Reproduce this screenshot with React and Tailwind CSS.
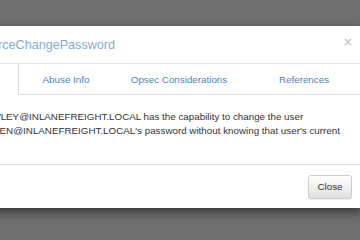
export default function App() {
  const font = { fontFamily: '"Liberation Sans", Arial, sans-serif' };
  return (
    <div
      className="w-[360px] h-[240px] overflow-hidden bg-[#6f6f6f] flex flex-col"
      style={font}
    >
      <div className="mt-[26px] ml-[-60px] w-[423px] h-[182px] shrink-0 bg-white rounded-[4px] shadow-[0_4px_11px_rgba(0,0,0,0.55)] flex flex-col">
        {/* header */}
        <div className="h-[38px] shrink-0 border-b border-[#e5e5e5] flex items-center justify-between pl-[10.5px] pr-[11px]">
          <span className="text-[12.6px] leading-[18px] text-[#86abd1] whitespace-nowrap">
            Help: ForceChangePassword
          </span>
          <span className="mb-[4px] text-[14.7px] leading-none font-bold text-[#cfcfcf]">×</span>
        </div>
        {/* tabs */}
        <div className="h-[31px] shrink-0 flex pl-[10px] text-[9.8px] whitespace-nowrap">
          <div className="w-[69px] pt-[2px] border-r border-[#dddddd] flex items-center justify-center text-[#555555]">
            Info
          </div>
          <div className="w-[94px] pt-[2px] border-b border-[#dddddd] flex items-center justify-center text-[#4f83ba]">
            Abuse Info
          </div>
          <div className="w-[132px] pt-[2px] border-b border-[#dddddd] flex items-center justify-center text-[#4f83ba]">
            Opsec Considerations
          </div>
          <div className="flex-1 pt-[2px] border-b border-[#dddddd] flex items-center justify-center text-[#4f83ba]">
            References
          </div>
        </div>
        {/* body */}
        <div className="h-[69px] shrink-0 pt-[15px] pl-[10px] text-[9.8px] leading-[14px] text-[#333333] whitespace-nowrap">
          <div>The user WLEY@INLANEFREIGHT.LOCAL has the capability to change the user</div>
          <div>DAMUNDSEN@INLANEFREIGHT.LOCAL's password without knowing that user's current</div>
          <div>password.</div>
        </div>
        {/* footer */}
        <div className="flex-1 border-t border-[#e5e5e5] flex justify-end items-start pt-[10px] pr-[11px]">
          <button className="w-[44px] h-[24px] rounded-[3px] border border-[#cccccc] bg-gradient-to-b from-white to-[#e0e0e0] text-[9.8px] text-[#333333] shadow-[inset_0_1px_0_rgba(255,255,255,0.15),0_1px_1px_rgba(0,0,0,0.08)] flex items-center justify-center">
            Close
          </button>
        </div>
      </div>
    </div>
  );
}
